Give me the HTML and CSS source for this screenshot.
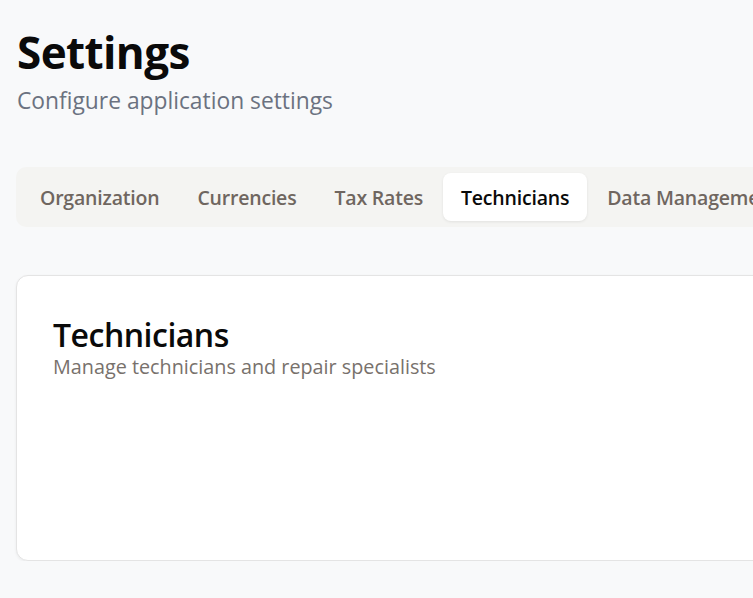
FILE: index.html
```html
<!DOCTYPE html>
<html lang="en">
<head>
<meta charset="utf-8">
<title>Settings</title>
<link rel="stylesheet" href="styles.css">
</head>
<body>
<main class="page">
  <header class="page-header">
    <h1 class="page-title">Settings</h1>
    <p class="page-subtitle">Configure application settings</p>
  </header>
  <nav class="tabs">
    <button class="tab">Organization</button>
    <button class="tab">Currencies</button>
    <button class="tab">Tax Rates</button>
    <button class="tab tab-active">Technicians</button>
    <button class="tab">Data Management</button>
  </nav>
  <section class="card">
    <h2 class="card-title">Technicians</h2>
    <p class="card-desc">Manage technicians and repair specialists</p>
  </section>
</main>
</body>
</html>
```

FILE: styles.css
```css
html, body {
  margin: 0;
  padding: 0;
  overflow: hidden;
}
body {
  background: #f8f9fa;
  font-family: "Open Sans", "Noto Sans", sans-serif;
  color: #0a0a0a;
}
.page {
  width: 900px;
  padding: 22px 0 0 16px;
}
.page-header {
  padding-left: 1px;
}
.page-title {
  margin: 0;
  font-size: 44px;
  font-weight: 700;
  line-height: 60px;
  letter-spacing: -0.6px;
}
.page-subtitle {
  margin: 4px 0 0;
  font-size: 22.8px;
  line-height: 30px;
  color: #6b7280;
}
.tabs {
  margin-top: 51px;
  display: flex;
  gap: 2px;
  padding: 6px;
  background: #f4f4f2;
  border-radius: 10px;
}
.tab {
  font-family: inherit;
  border: 0;
  background: transparent;
  padding: 0 18px;
  height: 48px;
  font-size: 19.5px;
  font-weight: 600;
  letter-spacing: -0.2px;
  color: #6f6660;
  border-radius: 8px;
  white-space: nowrap;
}
.tab-active {
  background: #ffffff;
  color: #0a0a0a;
  box-shadow: 0 1px 3px rgba(0,0,0,0.08);
}
.card {
  margin-top: 48px;
  height: 286px;
  box-sizing: border-box;
  background: #ffffff;
  border: 1px solid #e4e4e4;
  border-radius: 12px;
  box-shadow: 0 1px 3px rgba(0,0,0,0.06);
  padding: 40px 36px;
}
.card-title {
  margin: 0;
  font-size: 32px;
  font-weight: 600;
  line-height: 38px;
  letter-spacing: -0.5px;
}
.card-desc {
  margin: 0;
  font-size: 19.8px;
  line-height: 26px;
  color: #78716c;
}
```
